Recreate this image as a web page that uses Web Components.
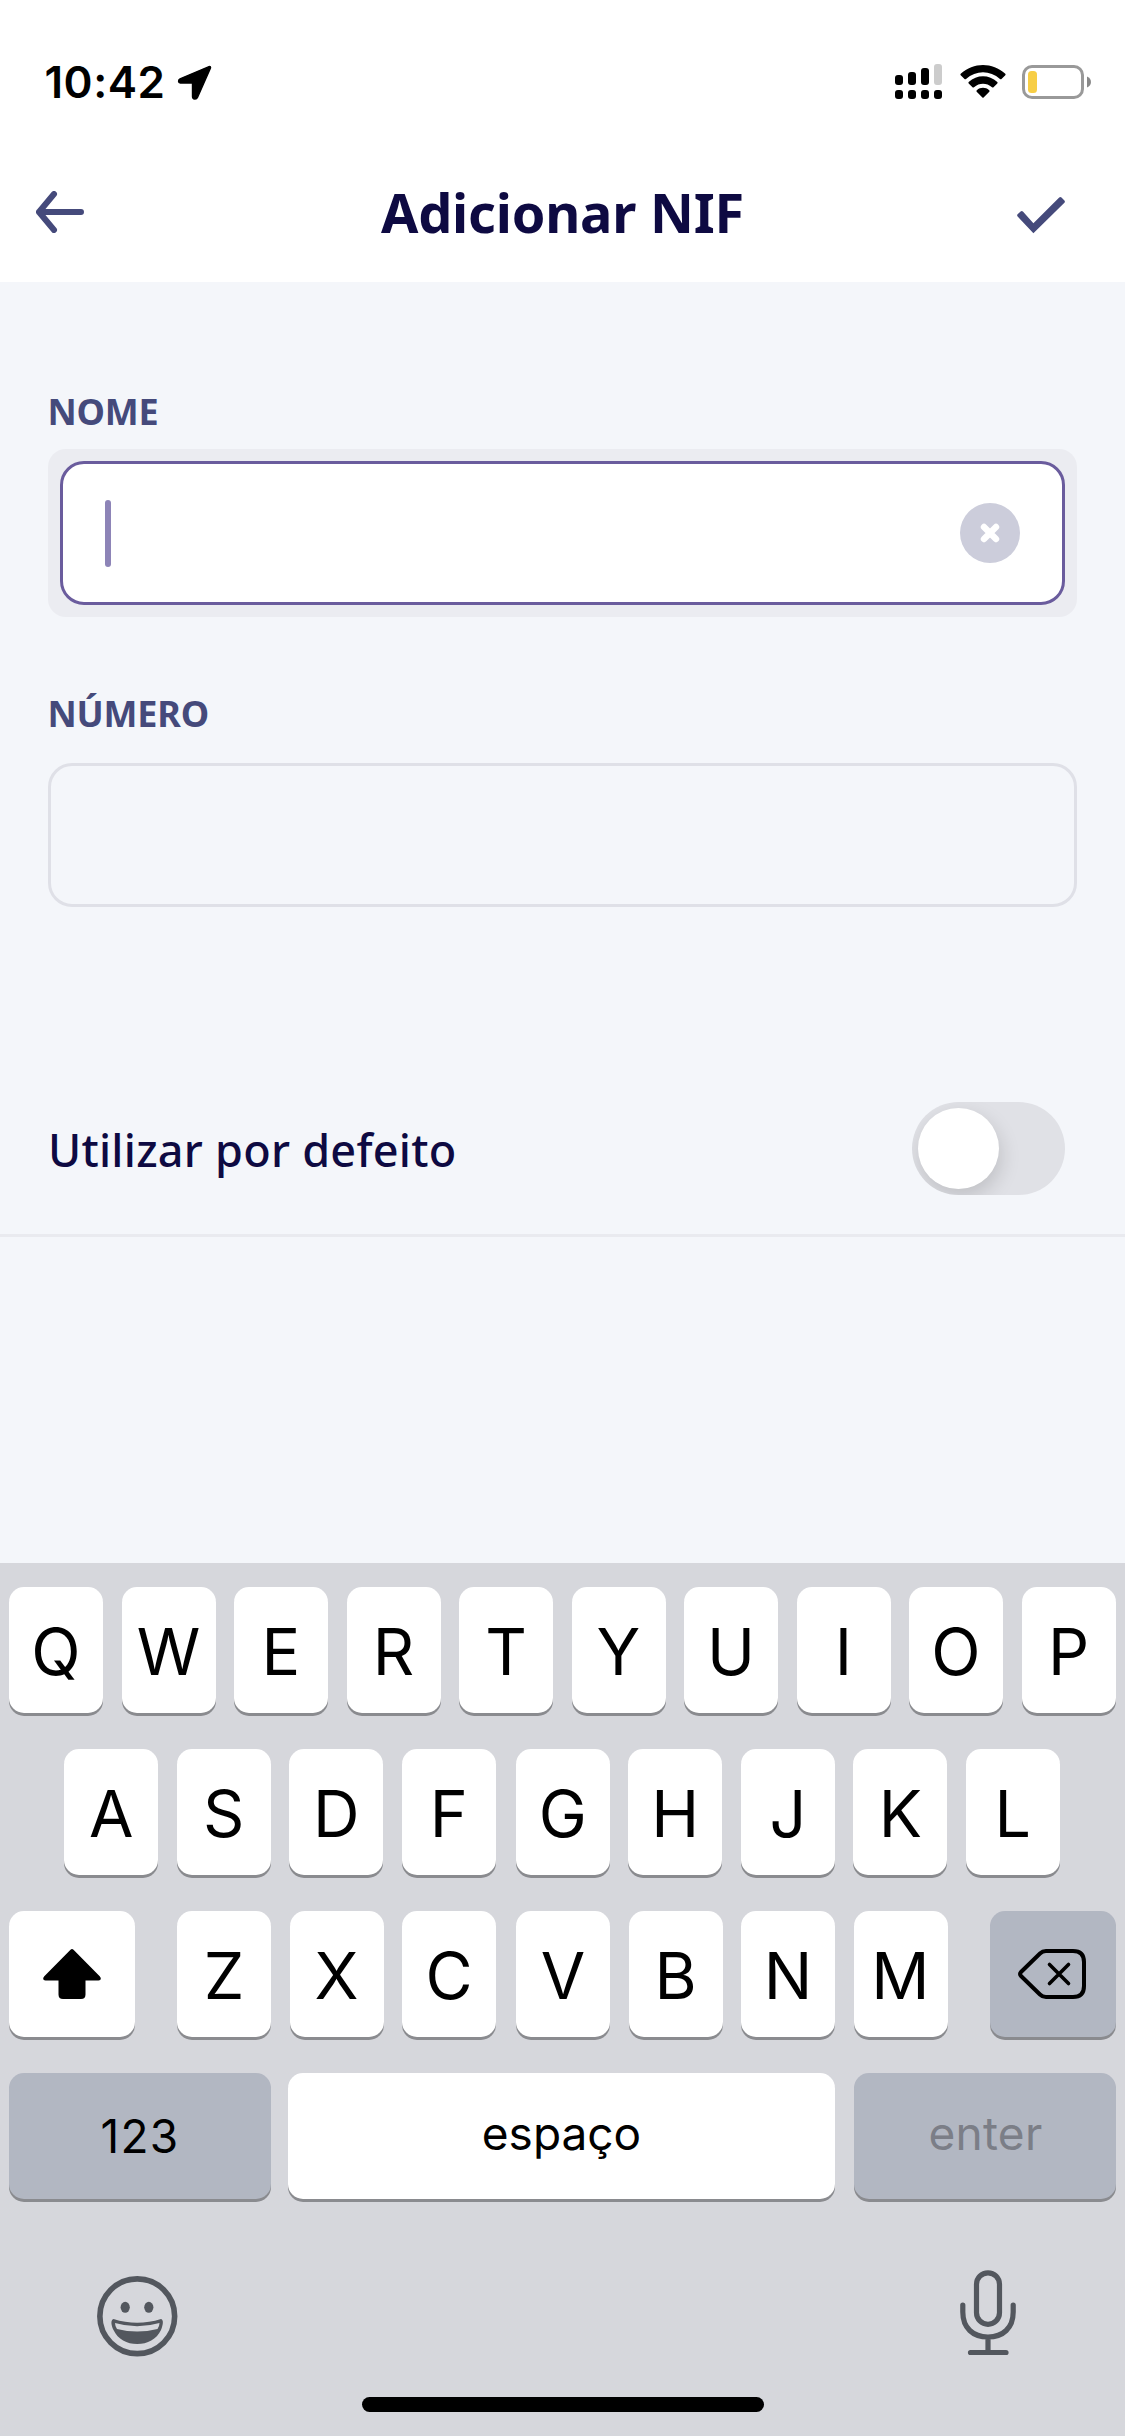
<!DOCTYPE html>
<html lang="pt">
<head>
<meta charset="utf-8">
<title>Adicionar NIF</title>
<style>
html,body{margin:0;padding:0}
body{width:1125px;height:2436px;overflow:hidden;background:#f4f6fa;font-family:"Noto Sans",sans-serif}
</style>
</head>
<body>
<nif-screen></nif-screen>
<script>
const define = (name, html) => customElements.define(name, class extends HTMLElement {
  constructor() {
    super();
    const t = document.createElement('template');
    t.innerHTML = html;
    this.attachShadow({ mode: 'open' }).append(t.content.cloneNode(true));
  }
});

define('status-bar', `
<style>
:host{display:flex;justify-content:space-between;height:164px;padding:0 34px 0 44.5px;box-sizing:border-box;font:600 44px/164px Inter,sans-serif;color:#000}
.l,.r{display:flex;align-items:center}
.l svg{margin-left:10px}
.time{letter-spacing:.5px;width:122px;white-space:nowrap}
svg{display:block}
</style>
<div class="l"><span class="time">10:42</span>
<svg width="35" height="35" viewBox="0 0 35 35"><path d="M32 1.6 3 13.8C1 14.7 1 18 3.300 18H15.500V31.500C15.500 34.600 19.500 34.800 20.600 32.200L33.400 3.300C33.900 1.900 33.200 1.100 32 1.600Z" fill="#000" stroke="#000" stroke-width="1.400"/></svg></div>
<div class="r">
<svg width="197" height="40" viewBox="894 62 197 40">
<g><rect x="895" y="75" width="8" height="10" rx="3"/><rect x="908" y="72" width="8" height="13" rx="3"/><rect x="921" y="68" width="8" height="17" rx="3"/><rect x="934" y="64" width="8" height="21" rx="3" fill="#ccc"/>
<rect x="895" y="90" width="8" height="9" rx="3"/><rect x="908" y="90" width="8" height="9" rx="3"/><rect x="921" y="90" width="8" height="9" rx="3"/><rect x="934" y="90" width="8" height="9" rx="3"/></g>
<g><path d="M960.700 75.300Q960 74.500 960.700 73.800C973.500 62 992.500 62 1005.300 73.800Q1006 74.500 1005.300 75.300L1001.500 79Q1000.800 79.600 1000 79C990 70.100 976 70.100 966 79Q965.200 79.600 964.500 79Z"/>
<path d="M968.700 83.500Q968 82.800 968.700 82C977 74.400 989 74.400 997.300 82Q998 82.800 997.300 83.500L993.500 87.200Q992.800 87.800 992 87.200C986.500 82.600 979.500 82.600 974 87.200Q973.200 87.800 972.500 87.200Z"/>
<path d="M976.700 91.700Q976 91 976.800 90.200C980.500 87 985.500 87 989.200 90.200Q990 91 989.300 91.700L983.600 97.500Q983 98 982.400 97.500Z"/></g>
<rect x="1023.500" y="66.500" width="59" height="31" rx="8.500" fill="none" stroke="#999" stroke-width="3"/>
<rect x="1028" y="71" width="9" height="22" rx="3.500" fill="#f7ce46"/>
<path d="M1087 76.500C1092.300 78.500 1092.300 85.500 1087 87.500Z" fill="#888"/>
</svg></div>`);

define('nav-bar', `
<style>
:host{display:grid;grid-template-columns:48px 1fr 48px;align-items:center;height:118px;box-sizing:border-box;padding:0 60px 22px 36px;color:#454a7b}
h1{margin:0;font:700 54px/96px "Noto Sans",sans-serif;color:#0e0a42;text-align:center;padding-left:24px;letter-spacing:-.2px;white-space:nowrap}
svg{display:block}
</style>
<svg width="48" height="42" viewBox="0 0 48 42" fill="none" stroke="#454a7b" stroke-width="6" stroke-linecap="round" stroke-linejoin="round"><path d="M45 21H3M18 3 3 21 18 39"/></svg>
<h1><slot></slot></h1>
<svg width="48" height="48" viewBox="0 0 48 48" fill="#454a7b"><path d="M.6 19.400Q-.4 18.300.6 17.200L3.600 14.400Q4.800 13.400 5.900 14.500L16.400 26.300 42.200.6Q43.400 -.4 44.500.6L47.400 3.500Q48.400 4.700 47.400 5.800L16.400 36.300Z" transform="translate(0 9)"/></svg>`);

define('text-field', `
<style>
:host{display:block}
label{display:block;font:700 36px/50px "Noto Sans",sans-serif;color:#454a7b;letter-spacing:-.2px;margin-left:-.5px}
.halo{box-sizing:border-box;display:flex;margin-top:var(--gap,12px)}
.box{flex:1;box-sizing:border-box;height:144px;border:3px solid #dfe0e7;border-radius:24px;display:flex;align-items:center;justify-content:space-between;padding:0 42px}
.box>*{display:none}
:host([focused]) .halo{background:#ebecf1;padding:12px;border-radius:18px}
:host([focused]) .box{background:#fff;border-color:#6a5c9d}
:host([focused]) .box>*{display:block}
.caret{width:6px;height:67px;border-radius:3px;background:#8d84b7}
</style>
<label><slot></slot></label>
<div class="halo"><div class="box"><span class="caret"></span>
<svg width="60" height="60" viewBox="0 0 60 60"><circle cx="30" cy="30" r="30" fill="#cccddb"/><path d="M24 24 36 36M36 24 24 36" stroke="#fff" stroke-width="6.400" stroke-linecap="round"/></svg></div></div>`);

define('toggle-row', `
<style>
:host{display:flex;align-items:center;justify-content:space-between;height:177px;box-sizing:border-box;border-bottom:3px solid #e9eaef;padding:3px 60px 0 48px}
.t{font:500 45px/60px "Noto Sans",sans-serif;color:#0e0a42;white-space:nowrap;letter-spacing:.25px;padding-top:3px}
.sw{width:153px;height:93px;box-sizing:border-box;border-radius:47px;background:#e0e1e6;padding:6px;overflow:hidden;display:flex}
.k{width:81px;height:81px;border-radius:50%;background:#fff;box-shadow:2px 8px 20px rgba(0,0,0,.15)}
</style><span class="t"><slot></slot></span><span class="sw"><span class="k"></span></span>`);

define('kb-key', `
<style>
:host{display:flex;align-items:center;justify-content:center;box-sizing:border-box;width:94px;height:126px;border-radius:15px;background:#fff;box-shadow:0 3px 0 #8a8b8f;color:#000;font:400 64.5px/126px Inter,sans-serif;padding-top:3px;flex:none}
:host([wide]){font-size:46px;padding:0 0 7px}
:host([dark]){background:#b2b7c2}
:host([muted]){color:#7b7e87}
</style><slot></slot>`);

define('soft-keyboard', `
<style>
:host{display:flex;flex-direction:column;height:873px;box-sizing:border-box;padding-top:24px;background:#d6d7dc}
.row{display:flex;gap:18.5px;height:126px;margin-bottom:36px;padding:0 9px}
.mid{padding-left:64.3px}
.shift,.del{width:126px;padding:0}
.shift{margin-right:23.5px}.del{margin-left:23.5px;padding-right:1px}
.g{margin-left:1.5px}
.n{width:262px;padding:0;letter-spacing:1.3px}.sp{width:547px;margin-left:-1.5px}.en{width:262px;letter-spacing:.3px;padding-left:2px}
.foot{display:flex;justify-content:space-between;padding:0 108px 0 97px;height:85px;margin-top:35px;align-items:flex-start}
.home{width:402px;height:15px;border-radius:8px;background:#000;margin:42px 0 0 362px}
svg{display:block;flex:none}
</style>
<div class="row"><kb-key>Q</kb-key><kb-key>W</kb-key><kb-key>E</kb-key><kb-key>R</kb-key><kb-key>T</kb-key><kb-key>Y</kb-key><kb-key>U</kb-key><kb-key>I</kb-key><kb-key>O</kb-key><kb-key>P</kb-key></div>
<div class="row mid"><kb-key>A</kb-key><kb-key>S</kb-key><kb-key>D</kb-key><kb-key>F</kb-key><kb-key class="g">G</kb-key><kb-key>H</kb-key><kb-key>J</kb-key><kb-key>K</kb-key><kb-key>L</kb-key></div>
<div class="row"><kb-key class="shift"><svg width="58" height="50" viewBox="0 0 58 50"><path d="M27.500.8Q29 -.6 30.500.8L56.700 27.200C58.700 29.300 57.800 31.500 55.500 31.500H42.500V45.500Q42.500 50 38 50H20Q15.500 50 15.500 45.500V31.500H2.500C.2 31.500-.7 29.300 1.300 27.200Z"/></svg></kb-key><kb-key>Z</kb-key><kb-key>X</kb-key><kb-key>C</kb-key><kb-key class="g">V</kb-key><kb-key>B</kb-key><kb-key>N</kb-key><kb-key>M</kb-key><kb-key class="del" dark><svg width="68" height="50" viewBox="0 0 68 50" fill="none" stroke="#000" stroke-width="4" stroke-linejoin="round" stroke-linecap="round"><path d="M28 2H55Q66 2 66 13V37Q66 48 55 48H28Q24.500 48 22 45.500L3 27Q1 25 3 23L22 4.500Q24.500 2 28 2Z"/><path d="M31.500 15.500 50.500 34.500M50.500 15.500 31.500 34.500" stroke-width="3.600"/></svg></kb-key></div>
<div class="row"><kb-key wide dark class="n">123</kb-key><kb-key wide class="sp">espaço</kb-key><kb-key wide dark muted class="en">enter</kb-key></div>
<div class="foot">
<svg width="81" height="81" viewBox="0 0 81 81" style="margin-top:5.500px" fill="#53575e"><circle cx="40.250" cy="40.250" r="37.400" fill="none" stroke="#53575e" stroke-width="5.600"/><ellipse cx="28.200" cy="31.300" rx="4.600" ry="5.500"/><ellipse cx="51.800" cy="31.300" rx="4.600" ry="5.500"/><path d="M16.500 43Q40 50.500 64 43C67 44 66 49 64 54C59.500 63.500 50.500 68 40.200 68S21 63.500 16.500 54C14 49 13.500 44 16.500 43Z"/><path d="M18 47Q40 53.500 62.500 47Q62.500 50 60.500 53Q40 58 20 53Q18 50 18 47Z" fill="#d6d7dc"/></svg>
<svg width="57" height="86" viewBox="0 0 57 86" fill="none" stroke="#53575e" stroke-width="5.200" stroke-linecap="round"><rect x="16.500" y="2.800" width="23" height="51.500" rx="11.500"/><path d="M2.800 35V42C2.800 58 13 67 28 67S53.200 58 53.200 42V35M28 67V82.500M10.500 82.500H46"/></svg>
</div>
<div class="home"></div>`);

define('nif-screen', `
<style>
:host{display:flex;flex-direction:column;height:2436px}
header{background:#fff;height:282px}
main{flex:1}
text-field{margin:0 48px}
.a{padding-top:105px}
.b{padding-top:72px;--gap:24px}
toggle-row{margin-top:153px}
</style>
<header><status-bar></status-bar><nav-bar>Adicionar NIF</nav-bar></header>
<main><text-field class="a" focused>NOME</text-field><text-field class="b">NÚMERO</text-field><toggle-row>Utilizar por defeito</toggle-row></main>
<soft-keyboard></soft-keyboard>`);
</script>
</body>
</html>
